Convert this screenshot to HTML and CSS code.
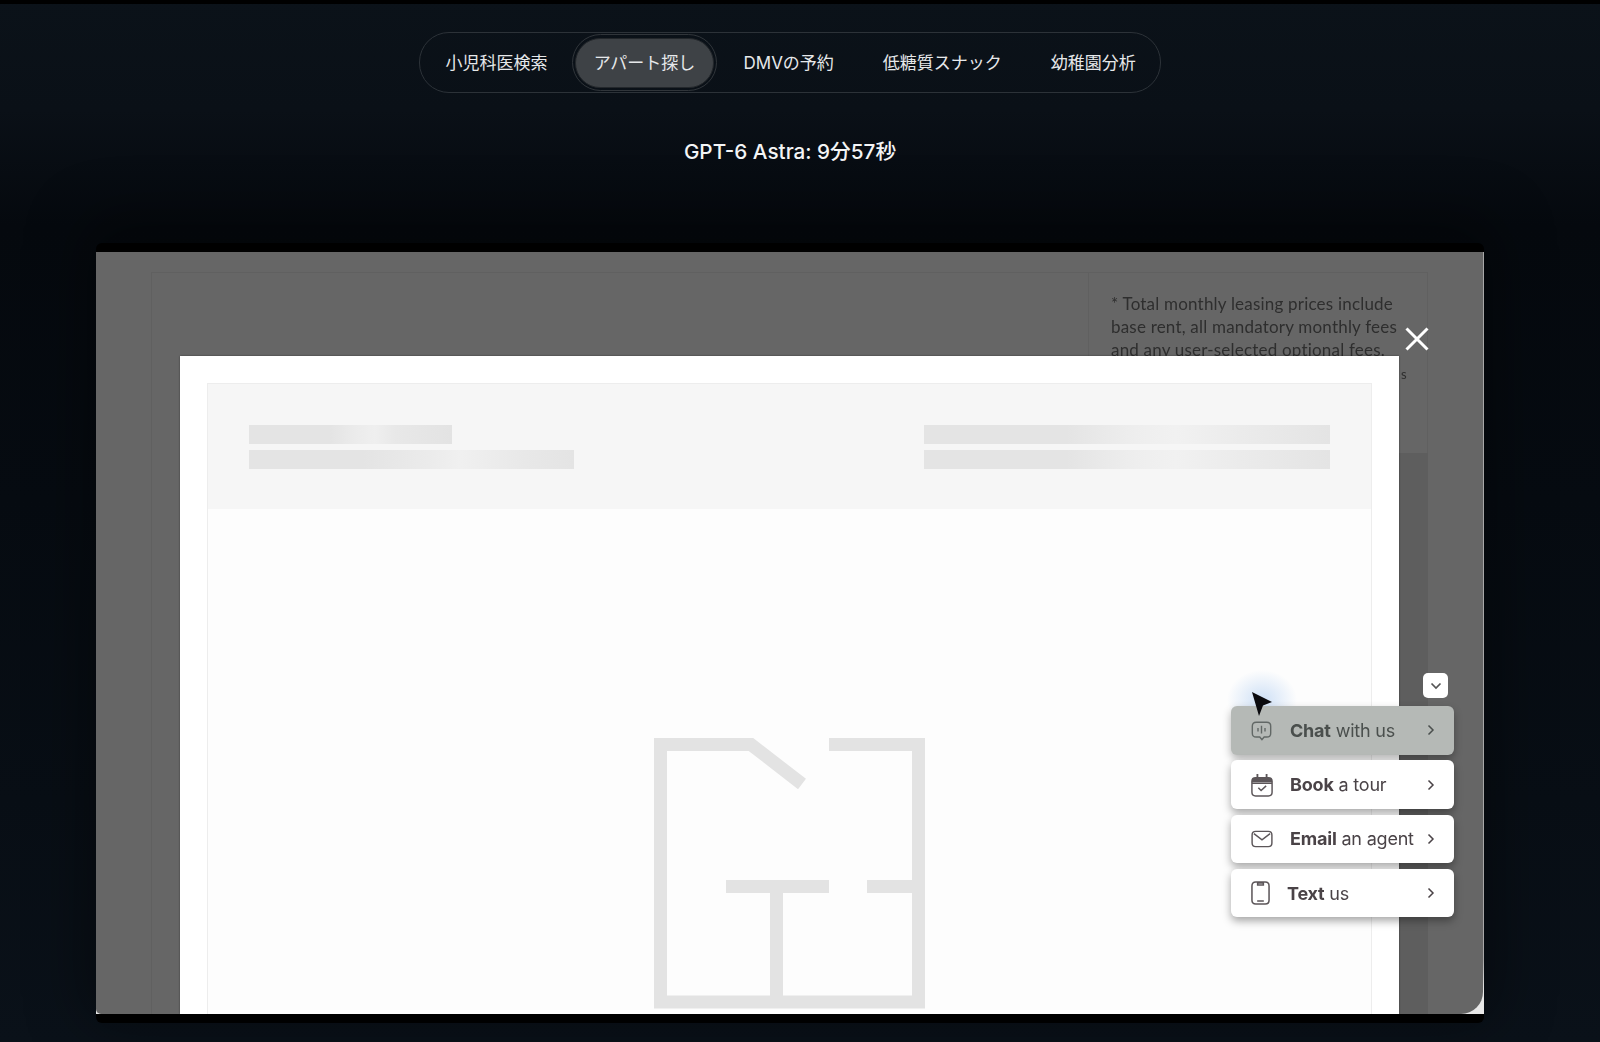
FILE: index.html
```html
<!DOCTYPE html>
<html lang="ja">
<head>
<meta charset="utf-8">
<title>GPT-6 Astra</title>
<link rel="stylesheet" href="styles.css">
</head>
<body>
<div class="topstrip"></div>
<div class="page">
<nav class="tabs-wrap">
  <div class="tabs">
    <span class="tab">小児科医検索</span>
    <span class="tab-active"><span class="tab-fill">アパート探し</span></span>
    <span class="tab">DMVの予約</span>
    <span class="tab">低糖質スナック</span>
    <span class="tab">幼稚園分析</span>
  </div>
</nav>
<h1 class="caption">GPT-6 Astra: 9分57秒</h1>
<main class="frame">
  <div class="screen">
    <div class="dim">
      <div class="page-lines"></div>
      <div class="side-panel"></div>
      <div class="darker"></div>
      <p class="fine-print">* Total monthly leasing prices include<br>base rent, all mandatory monthly fees<br>and any user-selected optional fees.</p>
      <span class="tail">s</span>
      <section class="modal">
        <div class="sheet">
          <header class="sheet-head">
            <div class="bars">
              <div class="bar bar-a"></div>
              <div class="bar bar-b"></div>
            </div>
            <div class="bars bars-right">
              <div class="bar bar-c"></div>
              <div class="bar bar-c"></div>
            </div>
          </header>
          <div class="plan-wrap">
            <svg class="plan" width="272" height="271" viewBox="0 0 272 271" aria-hidden="true">
              <g fill="none" stroke="#e3e3e3" stroke-width="13">
                <path d="M6.500 264V6.500H97L148 46"/>
                <path d="M175 6.500H264.500V264"/>
                <path d="M0 264H271"/>
                <path d="M72 148.500H175"/>
                <path d="M213 148.500H264"/>
                <path d="M122.500 148V258"/>
              </g>
            </svg>
          </div>
        </div>
      </section>
      <svg class="close" width="26" height="26" viewBox="0 0 26 26" aria-hidden="true">
        <path d="M2.500 2.500L23.500 23.500M23.500 2.500L2.500 23.500" stroke="#fff" stroke-width="3" fill="none"/>
      </svg>
      <div class="toggle">
        <svg width="12" height="8" viewBox="0 0 12 8" aria-hidden="true"><path d="M1.500 1.500L6 6L10.500 1.500" fill="none" stroke="#555" stroke-width="1.700"/></svg>
      </div>
      <div class="glow"></div>
      <ul class="menu">
        <li class="row row-hover">
          <svg class="ico ico-wide" width="21" height="21" viewBox="0 0 24 24" aria-hidden="true"><path d="M6 2.500H18Q22.500 2.500 22.500 7V15Q22.500 19.500 18 19.500H15L12.500 22.500L10 19.500H6Q1.500 19.500 1.500 15V7Q1.500 2.500 6 2.500ZM8 9V13M12 6.500V15.500M16 9V13"/></svg>
          <span class="label"><b>Chat</b> with us</span>
          <svg class="chev" width="8" height="12" viewBox="0 0 8 12" aria-hidden="true"><path d="M1.500 1.500L6 6L1.500 10.500"/></svg>
        </li>
        <li class="row">
          <svg class="ico" width="22" height="24" viewBox="0 0 24 26" aria-hidden="true"><path d="M5 5H19Q23 5 23 9V21Q23 25 19 25H5Q1 25 1 21V9Q1 5 5 5ZM8 16L11 19L16.500 14M1.500 11H22.500"/><path class="ico-fill" d="M5 5H19Q23 5 23 9V10H1V9Q1 5 5 5ZM6 1H8V5H6ZM16 1H18V5H16Z"/></svg>
          <span class="label"><b>Book</b> a tour</span>
          <svg class="chev" width="8" height="12" viewBox="0 0 8 12" aria-hidden="true"><path d="M1.500 1.500L6 6L1.500 10.500"/></svg>
        </li>
        <li class="row">
          <svg class="ico" width="22" height="18" viewBox="0 0 24 20" aria-hidden="true"><path d="M5 1.500H19Q23 1.500 23 5.500V14.500Q23 18.500 19 18.500H5Q1 18.500 1 14.500V5.500Q1 1.500 5 1.500ZM3 4L12 11L21 4"/></svg>
          <span class="label"><b>Email</b> an agent</span>
          <svg class="chev" width="8" height="12" viewBox="0 0 8 12" aria-hidden="true"><path d="M1.500 1.500L6 6L1.500 10.500"/></svg>
        </li>
        <li class="row">
          <svg class="ico" width="19" height="24" viewBox="0 0 20 25" aria-hidden="true"><path d="M5 1H15Q19 1 19 5V20Q19 24 15 24H5Q1 24 1 20V5Q1 1 5 1ZM7 2H13V4H7ZM6.500 21H13.500"/></svg>
          <span class="label"><b>Text</b> us</span>
          <svg class="chev" width="8" height="12" viewBox="0 0 8 12" aria-hidden="true"><path d="M1.500 1.500L6 6L1.500 10.500"/></svg>
        </li>
      </ul>
      <svg class="cursor" width="22" height="26" viewBox="0 0 22 26" aria-hidden="true"><path d="M1 1L21 11L12 14.500L8 25Z" fill="#0a0a0e"/></svg>
    </div>
  </div>
</main>
</div>
</body>
</html>
```
FILE: styles.css
```css
* { box-sizing: border-box; }
html, body { margin: 0; padding: 0; }
body {
  width: 1600px;
  height: 1042px;
  overflow: hidden;
  background: linear-gradient(180deg, #0b1219 0, #0a1017 110px, #05090e 225px, #060b11 500px, #080e15 800px, #0a1119 1042px);
  font-family: "Inter", "Noto Sans CJK JP", sans-serif;
  color: #fff;
}
.topstrip { height: 4px; background: #000; }
.page { width: 1580px; }
.tabs-wrap { display: flex; justify-content: center; padding-top: 28px; }
.tabs {
  display: flex;
  align-items: center;
  width: 742px;
  height: 61px;
  padding-left: 1px;
  border: 1px solid #2c3238;
  border-radius: 30px;
}
.tab {
  padding: 0 24.500px;
  font-size: 17px;
  line-height: 24px;
  color: #e6e8ea;
  white-space: nowrap;
}
.tab-active {
  flex: none;
  height: 57px;
  width: 145px;
  margin-right: 2px;
  padding: 3px 2px 2px;
  border: 1px solid #30353a;
  border-radius: 29px;
}
.tab-fill {
  display: flex;
  align-items: center;
  justify-content: center;
  height: 100%;
  padding-bottom: 3px;
  border: 1px solid #23272b;
  border-radius: 26px;
  background: #3e4246;
  font-size: 17px;
  color: #e6e8ea;
  white-space: nowrap;
}
.caption {
  margin: 44px 0 0;
  text-align: center;
  font-size: 20.700px;
  line-height: 30px;
  font-weight: 500;
  color: #f4f5f6;
}
.frame {
  width: 1388px;
  margin: 76px auto 0;
  padding: 9px 0;
  background: #000;
  border-radius: 6px;
  box-shadow: 0 -12px 60px 10px rgba(0, 0, 0, .4);
}
.screen {
  height: 762px;
  background: linear-gradient(180deg, #a8a8a8 0 93%, #e8e8e8 97%);
  overflow: hidden;
}
.dim {
  position: relative;
  width: 1387px;
  height: 762px;
  background: #666;
  overflow: hidden;
  border-radius: 0 0 22px 5px;
}
.page-lines {
  position: absolute;
  left: 55px;
  top: 20px;
  width: 1277px;
  height: 742px;
  border: 1px solid #606060;
  border-bottom: 0;
}
.side-panel {
  position: absolute;
  left: 992px;
  top: 20px;
  width: 340px;
  height: 182px;
  border-left: 1px solid #606060;
  border-bottom: 1px solid #606060;
}
.darker {
  position: absolute;
  left: 1303px;
  top: 201px;
  width: 29px;
  height: 561px;
  background: #5e5e5e;
}
.fine-print {
  position: absolute;
  left: 1015px;
  top: 40px;
  margin: 0;
  font-family: "Lato", sans-serif;
  font-size: 17px;
  line-height: 23px;
  letter-spacing: .2px;
  color: #2e2e2e;
  white-space: nowrap;
  filter: blur(.5px);
}
.tail {
  position: absolute;
  left: 1305px;
  top: 111px;
  font-family: "Lato", sans-serif;
  font-size: 13px;
  line-height: 23px;
  color: #2e2e2e;
  filter: blur(.5px);
}
.modal {
  position: absolute;
  left: 84px;
  top: 104px;
  width: 1219px;
  height: 658px;
  padding: 27px 27px 0 27px;
  background: #fff;
  box-shadow: 0 0 2px rgba(0, 0, 0, .4);
}
.sheet {
  height: 100%;
  border: 1px solid #ededed;
  border-bottom: 0;
  background: #fdfdfd;
}
.sheet-head {
  display: flex;
  justify-content: space-between;
  height: 125px;
  padding: 41px 41px 0 41px;
  background: #f6f6f6;
}
.bars { display: flex; flex-direction: column; gap: 6px; filter: blur(.6px); }
.bars-right { align-items: flex-end; }
.bar { height: 19px; }
.bar-a {
  width: 203px;
  background: linear-gradient(90deg, #e4e4e4 0 40%, #ebebeb 52%, #efefef 62%, #e8e8e8 72%, #e3e3e3 100%);
}
.bar-b {
  width: 325px;
  background: linear-gradient(90deg, #e4e4e4 0 35%, #ebebeb 55%, #f0f0f0 65%, #e8e8e8 85%, #e4e4e4 100%);
}
.bar-c {
  width: 406px;
  background: linear-gradient(90deg, #e4e4e4 0 35%, #eeeeee 52%, #f1f1f1 62%, #ebebeb 78%, #e4e4e4 100%);
}
.plan-wrap { display: flex; justify-content: center; padding: 229px 0 0 1px; }
.plan { display: block; flex: none; filter: blur(.5px); }
.close { position: absolute; left: 1308px; top: 74px; }
.toggle {
  position: absolute;
  left: 1327px;
  top: 421px;
  width: 25px;
  height: 25px;
  display: flex;
  align-items: center;
  justify-content: center;
  background: #fff;
  border-radius: 5px;
  filter: blur(.4px);
}
.glow {
  position: absolute;
  left: 1131px;
  top: 418px;
  width: 70px;
  height: 60px;
  border-radius: 50%;
  background: radial-gradient(closest-side, rgba(135, 180, 235, .4), rgba(135, 180, 235, 0));
}
.menu {
  position: absolute;
  left: 1135px;
  top: 454px;
  width: 223px;
  margin: 0;
  padding: 0;
  list-style: none;
  display: flex;
  flex-direction: column;
  gap: 5.800px;
  filter: blur(.5px);
}
.row {
  display: flex;
  align-items: center;
  height: 48.500px;
  padding: 0 19px 0 20px;
  background: #fff;
  border-radius: 6px;
  box-shadow: 0 4px 8px rgba(0, 0, 0, .35);
  color: #4a4347;
}
.row-hover { background: #b5b9b6; color: #4a4f4d; box-shadow: 0 4px 8px rgba(0, 0, 0, .3); }
.ico { flex: none; fill: none; stroke: #5c5659; stroke-width: 1.600; margin-right: 17px; }
.ico-wide { margin-right: 18px; stroke: #626866; }
.ico-fill { fill: #5c5659; stroke: none; }
.label { flex: 1; padding-top: 1px; font-size: 18px; line-height: 24px; white-space: nowrap; letter-spacing: -.2px; }
.label b { font-weight: 700; }
.chev { flex: none; fill: none; stroke: currentColor; stroke-width: 1.500; }
.cursor { position: absolute; left: 1155px; top: 439px; }
```
